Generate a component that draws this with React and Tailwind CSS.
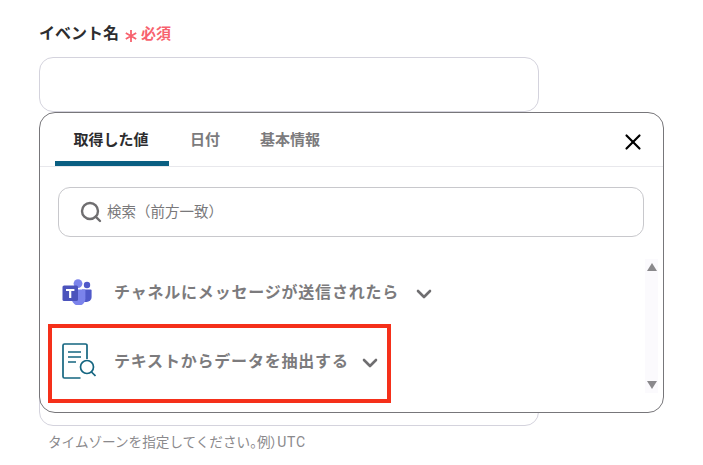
import { ChevronDown, Search, X } from 'lucide-react';

const FONT = "font-['Roboto','Noto_Sans_CJK_JP',sans-serif]";

function TeamsIcon() {
  return (
    <svg width="30" height="26" viewBox="0 0 30 26" className="shrink-0">
      <circle cx="16" cy="4.600" r="4.400" fill="#7b83eb" />
      <circle cx="25" cy="6" r="3.200" fill="#5059c9" />
      <path d="M20 10.500h8.600a1 1 0 0 1 1 1v6.500a5 5 0 0 1-5 5H20z" fill="#5059c9" />
      <path d="M8 10.500h14.400a1 1 0 0 1 1 1v7.500a6.800 6.800 0 0 1-13.600 1.500z" fill="#7b83eb" />
      <rect x="0.500" y="6.500" width="15.500" height="15.500" rx="1.600" fill="#4b53bc" />
      <path d="M4 10h8.400v1.900H9.300v7.200H7.100v-7.200H4z" fill="#fff" />
    </svg>
  );
}

function ExtractIcon() {
  return (
    <svg width="34" height="36" viewBox="0 0 34 36" fill="none" stroke="#146580" strokeWidth="1.700" className="shrink-0">
      <path d="M18.500 35H2.500A1.500 1.500 0 0 1 1 33.500V2.500A1.500 1.500 0 0 1 2.500 1h21A1.500 1.500 0 0 1 25 2.500V16" />
      <path d="M6 9h13M6 14h13M6 19h8" />
      <circle cx="25" cy="24" r="6.500" />
      <path d="M29.500 29l4 4" />
    </svg>
  );
}

function SourceRow({ icon, label, gap }) {
  return (
    <div className="flex h-[36px] items-center">
      <div className="flex w-[52px] shrink-0 items-center">{icon}</div>
      <span className="mt-[1px] text-[16px] font-bold tracking-[0.05em] text-[#7c7b7d]">{label}</span>
      <ChevronDown size={24} strokeWidth={2.600} className={`${gap} mt-[3px] text-[#6f6e70]`} />
    </div>
  );
}

export default function App() {
  return (
    <div className={`relative h-[465px] w-[703px] overflow-hidden bg-white ${FONT}`}>
      {/* form behind the popover */}
      <div className="px-[39px] pt-[23px]">
        <div className="flex h-[22px] items-center">
          <span className="text-[16px] font-bold leading-[22px] text-[#2d2d2f]">イベント名</span>
          <svg width="12" height="12" viewBox="0 0 12 12" stroke="#f7626e" strokeWidth="1.800" className="ml-[6px] mt-[3px]">
            <path d="M6 0v12M0.800 3l10.400 6M11.200 3L0.800 9" />
          </svg>
          <span className="ml-[4px] text-[15px] font-bold leading-[22px] text-[#f7626e]">必須</span>
        </div>
        <div className="mt-[12px] h-[55px] w-[500px] rounded-[14px] border border-[#d4d3dd]" />
        <div className="mt-[259px] h-[55px] w-[500px] rounded-[14px] border border-[#d4d3dd]" />
        <p className="ml-[9px] mt-[7px] text-[13.600px] leading-[18px] text-[#8a898c]">
          タイムゾーンを指定してください
          <span className="[font-feature-settings:'palt']">。</span>例
          <span className="[font-feature-settings:'palt']">）</span>
          <span className="text-[14px] tracking-[0.05em]">UTC</span>
        </p>
      </div>

      {/* popover */}
      <div className="absolute left-[39px] top-[112px] h-[301px] w-[625px] rounded-[16px] border border-[#77767a] bg-white">
        <div className="flex h-[54px] items-start border-b border-[#e8e8ec] pl-[15px]">
          <div className="flex h-[53px] w-[114px] items-center justify-center rounded-t-[4px] border-b-[5px] border-[#0a5f82] pt-[6px] pr-[2px] text-[15px] font-bold text-[#2d2d2f]">
            取得した値
          </div>
          <div className="ml-[21px] flex h-[53px] items-center pt-[2px] text-[15px] font-bold text-[#7c7b7d]">日付</div>
          <div className="ml-[40px] flex h-[53px] items-center pt-[2px] text-[15px] font-bold text-[#7c7b7d]">基本情報</div>
        </div>
        <X size={26} strokeWidth={2} className="absolute right-[17px] top-[16px] text-black" />

        <div className="mx-[18px] mt-[20px] flex h-[50px] w-[586px] items-center rounded-[12px] border border-[#c8c8cc] pl-[20px]">
          <Search size={24} strokeWidth={2.400} className="text-[#6f6e70]" />
          <span className="ml-[4px] mt-[1px] text-[14.500px] text-[#79787a]">検索（前方一致）</span>
        </div>

        <div className="mt-[37px] flex flex-col gap-[33px] pl-[22px]">
          <SourceRow icon={<TeamsIcon />} label="チャネルにメッセージが送信されたら" gap="ml-[13px]" />
          <SourceRow icon={<ExtractIcon />} label="テキストからデータを抽出する" gap="ml-[9px]" />
        </div>

        {/* scrollbar */}
        <div className="absolute right-[5px] top-[146px] flex h-[134px] w-[13px] flex-col items-center justify-between bg-[#fbfafd] py-[4px]">
          <div className="h-0 w-0 border-x-[5px] border-b-[8px] border-x-transparent border-b-[#8a898c]" />
          <div className="h-0 w-0 border-x-[5px] border-t-[8px] border-x-transparent border-t-[#8a898c]" />
        </div>
      </div>

      {/* red highlight */}
      <div className="absolute left-[48px] top-[324px] h-[79px] w-[343px] border-[4px] border-[#f5301a]" />
    </div>
  );
}
